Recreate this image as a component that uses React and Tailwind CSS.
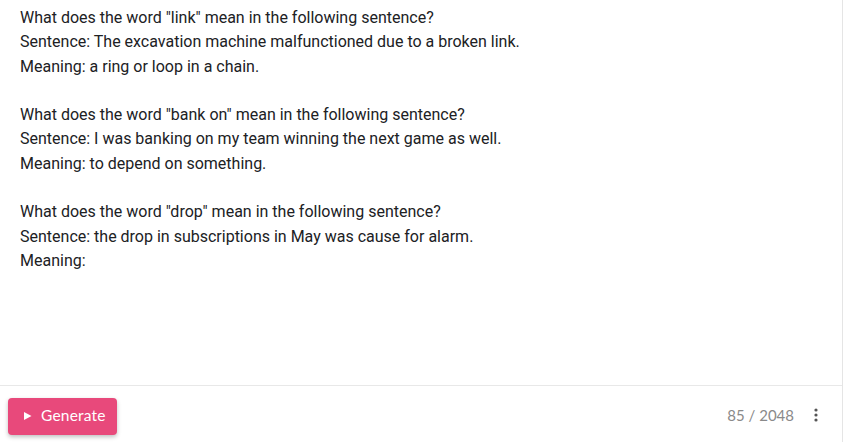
import React from "react";

const lines = [
  'What does the word "link" mean in the following sentence?',
  "Sentence: The excavation machine malfunctioned due to a broken link.",
  "Meaning: a ring or loop in a chain.",
  "",
  'What does the word "bank on" mean in the following sentence?',
  "Sentence: I was banking on my team winning the next game as well.",
  "Meaning: to depend on something.",
  "",
  'What does the word "drop" mean in the following sentence?',
  "Sentence: the drop in subscriptions in May was cause for alarm.",
  "Meaning:",
];

export default function App() {
  return (
    <div className="w-[846px] h-[442px] bg-white overflow-hidden">
      <div className="w-[843px] h-[442px] border-r border-[#e5e5e5] flex flex-col">
        <div
          className="flex-1 pl-5 pt-[6px] text-[16px] leading-[24.3px] text-[#202124]"
          style={{ fontFamily: "Roboto, 'Liberation Sans', sans-serif" }}
        >
          {lines.map((l, i) => (
            <div key={i} className="h-[24.3px] whitespace-pre">
              {l}
            </div>
          ))}
        </div>
        <div className="h-[57px] border-t border-[#e8e8e8] flex items-center pl-2 pr-[24px]">
          <button
            className="h-[37px] w-[109px] mt-[4px] rounded-[4px] bg-[#e8497b] text-white flex items-center pl-[15px] gap-[9px] shadow-[0_2px_4px_rgba(0,0,0,0.25)] text-[15.5px]"
            style={{ fontFamily: "Lato, 'Noto Sans', sans-serif" }}
          >
            <svg width="9" height="10" viewBox="0 0 9 10">
              <path d="M1 1 L8.5 5 L1 9 Z" fill="white" />
            </svg>
            <span className="tracking-[0.2px]">Generate</span>
          </button>
          <div className="flex-1" />
          <span
            className="text-[15px] text-[#8a8a8a] mt-[2px]"
            style={{ fontFamily: "Lato, 'Noto Sans', sans-serif" }}
          >
            85 / 2048
          </span>
          <svg className="ml-[20px] mt-[2px]" width="4" height="16" viewBox="0 0 4 16">
            <circle cx="2" cy="3" r="1.6" fill="#555" />
            <circle cx="2" cy="8" r="1.6" fill="#555" />
            <circle cx="2" cy="13" r="1.6" fill="#555" />
          </svg>
        </div>
      </div>
    </div>
  );
}
